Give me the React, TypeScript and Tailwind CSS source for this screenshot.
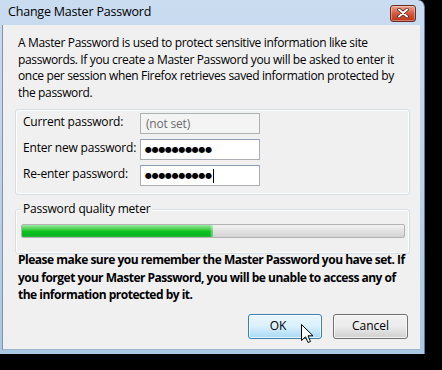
import React from "react";

function Dots({ n }: { n: number }) {
  return (
    <span className="flex items-center">
      {Array.from({ length: n }).map((_, i) => (
        <span
          key={i}
          className="inline-block w-[6.7px] text-center text-[8px] leading-none text-black"
          style={{ fontFamily: '"DejaVu Sans", sans-serif' }}
        >
          ●
        </span>
      ))}
    </span>
  );
}

export default function App() {
  const font = { fontFamily: '"Open Sans", "Noto Sans", sans-serif' };
  return (
    <div className="w-[442px] h-[370px] bg-black overflow-hidden relative" style={font}>
      <div className="w-[425px] h-[354px] rounded-tr-[7px] bg-gradient-to-b from-[#c9dcf0] via-[#bcd2ea] to-[#a9c8e6] flex flex-col border-r border-[#5d7896] overflow-hidden">
        {/* title bar */}
        <div className="h-[25px] flex items-center pl-[8px] pr-[8px] shrink-0">
          <span className="text-[12.5px] text-black tracking-[-0.2px]">Change Master Password</span>
          <div className="ml-auto mt-[1px] w-[26px] h-[17px] rounded-[3px] border border-[#6b2a22] bg-gradient-to-b from-[#e8a493] via-[#d4583f] to-[#bb3418] flex items-center justify-center shadow-[inset_0_0_0_1px_rgba(255,255,255,0.35)]">
            <svg width="12" height="10" viewBox="0 0 12 10">
              <path d="M2 1.5 L10 8.5 M10 1.5 L2 8.5" stroke="#4a1a14" strokeWidth="3.4" strokeLinecap="round" />
              <path d="M2 1.5 L10 8.5 M10 1.5 L2 8.5" stroke="#ffffff" strokeWidth="2" strokeLinecap="round" />
            </svg>
          </div>
        </div>
        {/* content */}
        <div className="flex-1 min-h-0 overflow-hidden ml-[2px] mr-[4px] mb-[4px] border-l border-[#8194aa] border-b border-b-[#9fb5cb] bg-[#f0f0f0] flex flex-col pl-[12px] pr-[12px] text-[12px] text-black relative">
          <p className="mt-[10px] ml-[3px] leading-[16.5px] tracking-[-0.35px] whitespace-nowrap">
            A Master Password is used to protect sensitive information like site<br />
            passwords. If you create a Master Password you will be asked to enter it<br />
            once per session when Firefox retrieves saved information protected by<br />
            the password.
          </p>
          {/* group 1 */}
          <div className="mt-[8px] w-[395px] h-[86px] shrink-0 rounded-[3px] border border-[#d5dfe5] shadow-[inset_0_0_0_1px_#ffffff] flex flex-col gap-[5px] pt-[3px] pl-[7px]">
            {[
              { label: "Current password:", kind: "disabled" },
              { label: "Enter new password:", kind: "dots" },
              { label: "Re-enter password:", kind: "caret" },
            ].map((r) => (
              <div key={r.label} className="flex items-center h-[21px]">
                <span className="w-[117px] tracking-[-0.2px] -mt-[4px] whitespace-nowrap">{r.label}</span>
                {r.kind === "disabled" ? (
                  <div className="w-[120px] h-[21px] border border-[#adb2b5] bg-[#f4f4f4] flex items-center pl-[5px] text-[#6d6d6d] tracking-[-0.2px]">
                    (not set)
                  </div>
                ) : (
                  <div className="w-[120px] h-[21px] border border-[#abadb3] border-t-[#8e9eb1] bg-white flex items-center pl-[4px]">
                    <Dots n={10} />
                    {r.kind === "caret" && <span className="inline-block w-[1px] h-[14px] bg-black ml-[1px]" />}
                  </div>
                )}
              </div>
            ))}
          </div>
          {/* group 2 */}
          <div className="relative mt-[14px] w-[395px] h-[45px] shrink-0 rounded-[3px] border border-[#d5dfe5] shadow-[inset_0_0_0_1px_#ffffff]">
            <span className="absolute -top-[10px] left-[5px] bg-[#f0f0f0] px-[2px] leading-[18px] tracking-[-0.2px] whitespace-nowrap">
              Password quality meter
            </span>
            <div className="absolute left-[5px] top-[14px] w-[384px] h-[14px] rounded-[2px] border border-[#b2b2b2] bg-gradient-to-b from-[#f3f3f3] via-[#e2e2e2] to-[#d3d3d3] overflow-hidden">
              <div className="h-full w-[191px] bg-gradient-to-b from-[#8ee896] via-[#0ec41f] to-[#07b020] shadow-[inset_-2px_0_2px_rgba(255,255,255,0.4)]" />
            </div>
          </div>
          <p className="-mt-[3px] ml-[3px] font-bold leading-[17.5px] tracking-[-0.5px] whitespace-nowrap">
            Please make sure you remember the Master Password you have set. If<br />
            you forget your Master Password, you will be unable to access any of<br />
            the information protected by it.
          </p>
          <div className="mt-[10px] flex justify-end gap-[11px] w-[393px] shrink-0">
            <button className="w-[74px] h-[25px] rounded-[3px] border border-[#3c7fb1] bg-gradient-to-b from-[#eaf6fd] via-[#d9f0fc] to-[#a7d9f5] shadow-[inset_0_0_0_1px_rgba(255,255,255,0.7)] text-[12px] flex items-center justify-center pr-[14px]">
              OK
            </button>
            <button className="w-[75px] h-[25px] rounded-[3px] border border-[#707070] bg-gradient-to-b from-[#f2f2f2] via-[#ebebeb] to-[#cfcfcf] shadow-[inset_0_0_0_1px_rgba(255,255,255,0.7)] text-[12px] flex items-center justify-center">
              Cancel
            </button>
          </div>
        </div>
      </div>
      {/* cursor */}
      <svg className="absolute left-[301px] top-[324px]" width="13" height="20" viewBox="0 0 13 20">
        <path d="M0.5 0.5 L0.5 16.5 L4.5 12.8 L7 18.5 L9.5 17.5 L7 11.8 L12 11.8 Z" fill="#ffffff" stroke="#000000" strokeWidth="1" strokeLinejoin="miter" />
      </svg>
    </div>
  );
}
